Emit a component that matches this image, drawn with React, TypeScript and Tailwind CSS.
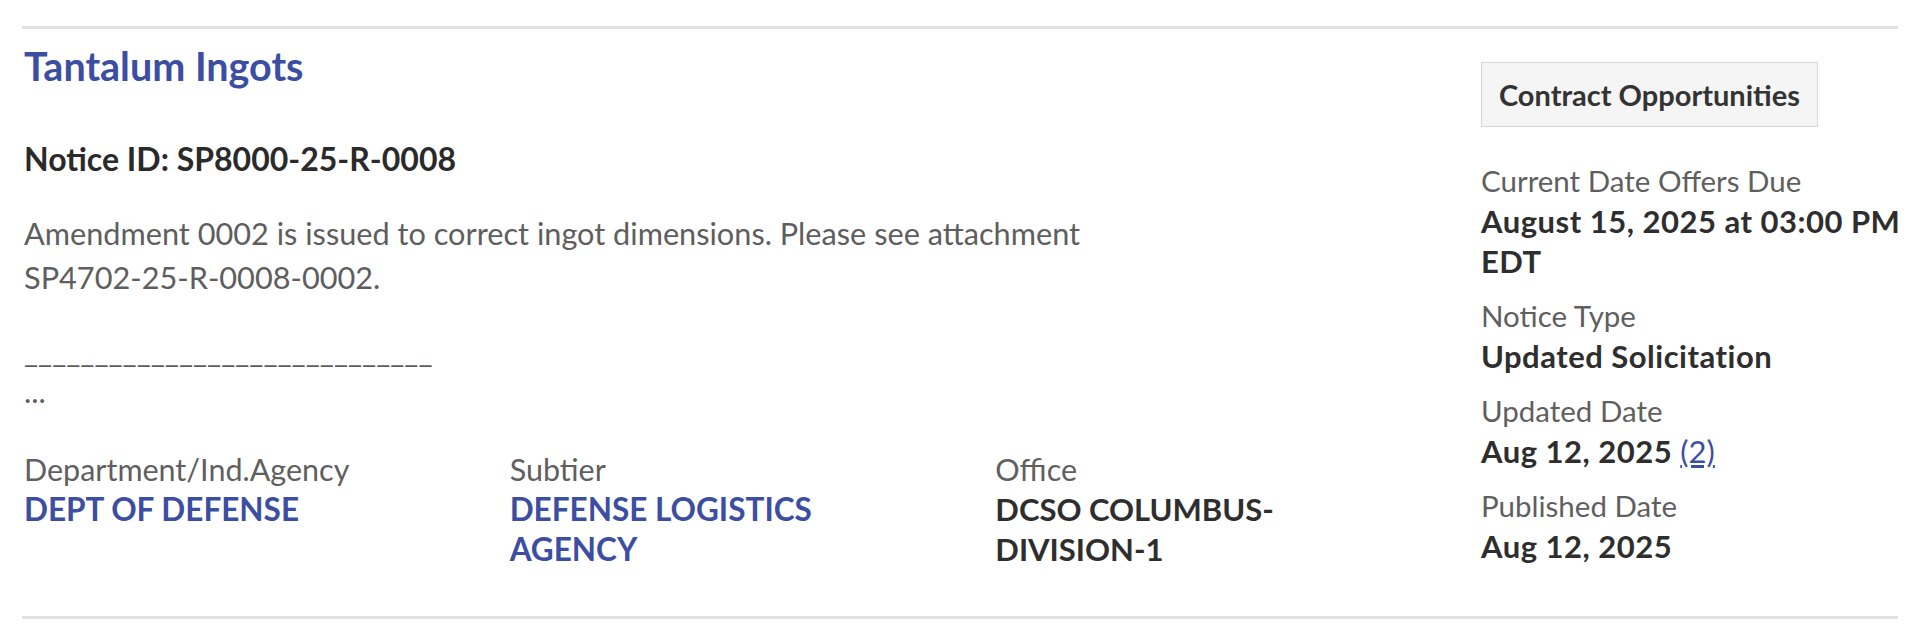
import React from "react";

type Field = {
  label: string;
  value: React.ReactNode;
  link?: boolean;
};

const orgFields: Field[] = [
  { label: "Department/Ind.Agency", value: "DEPT OF DEFENSE", link: true },
  {
    label: "Subtier",
    value: (
      <>
        DEFENSE LOGISTICS
        <br />
        AGENCY
      </>
    ),
    link: true,
  },
  {
    label: "Office",
    value: (
      <>
        DCSO COLUMBUS-
        <br />
        DIVISION-1
      </>
    ),
  },
];

function SideItem({ label, children }: { label: string; children: React.ReactNode }) {
  return (
    <div>
      <div className="text-[29.5px] leading-[41px] text-[#5f5f5f]">{label}</div>
      <div className="whitespace-nowrap text-[31px] leading-[40px] font-bold tracking-[0.5px] text-[#2e2e2e]">
        {children}
      </div>
    </div>
  );
}

function App() {
  return (
    <div
      className="w-[1920px] h-[629px] bg-white pt-[26px] px-[22px]"
      style={{ fontFamily: "Lato, 'Open Sans', sans-serif" }}
    >
      <div className="flex h-[593px] border-t-[3px] border-b-[3px] border-[#e2e2e2]">
        <div className="flex-1 pl-[2px]">
          <h3 className="mt-[14px] text-[39.5px] leading-[46px] font-bold text-[#3b4ea2]">
            Tantalum Ingots
          </h3>
          <p className="mt-[50px] text-[32px] leading-[40px] font-bold text-[#2a2a2a]">
            Notice ID: SP8000-25-R-0008
          </p>
          <p className="mt-[33px] text-[30.7px] leading-[44px] text-[#5e5e5e]">
            Amendment 0002 is issued to correct ingot dimensions. Please see attachment
            <br />
            SP4702-25-R-0008-0002.
          </p>
          <p className="mt-[31px] text-[30.7px] leading-[42px] text-[#5e5e5e]">
            _____________________________
          </p>
          <p className="-mt-[2px] text-[30.7px] leading-[42px] text-[#5e5e5e]">...</p>
          <div className="mt-[36px] grid grid-cols-3">
            {orgFields.map((f) => (
              <div key={f.label}>
                <div className="text-[30.5px] leading-[40px] text-[#5f5f5f]">{f.label}</div>
                <div
                  className={
                    f.link
                      ? "text-[31.5px] leading-[40px] font-bold text-[#3b4ea2]"
                      : "text-[31px] leading-[40px] font-bold text-[#2e2e2e]"
                  }
                >
                  {f.value}
                </div>
              </div>
            ))}
          </div>
        </div>

        <div className="w-[417px] shrink-0">
          <div className="mt-[33px] inline-flex h-[65px] w-[337px] items-center justify-center border border-[#d6d6d6] bg-[#f5f5f5] text-[29px] font-bold text-[#333333]">
            Contract Opportunities
          </div>
          <div className="mt-[33px] flex flex-col gap-[14px]">
            <SideItem label="Current Date Offers Due">
              August 15, 2025 at 03:00 PM
              <br />
              EDT
            </SideItem>
            <SideItem label="Notice Type">Updated Solicitation</SideItem>
            <SideItem label="Updated Date">
              Aug 12, 2025{" "}
              <a href="#" className="font-normal tracking-normal text-[#3b4ea2] underline">
                (2)
              </a>
            </SideItem>
            <SideItem label="Published Date">Aug 12, 2025</SideItem>
          </div>
        </div>
      </div>
    </div>
  );
}

export default App;
